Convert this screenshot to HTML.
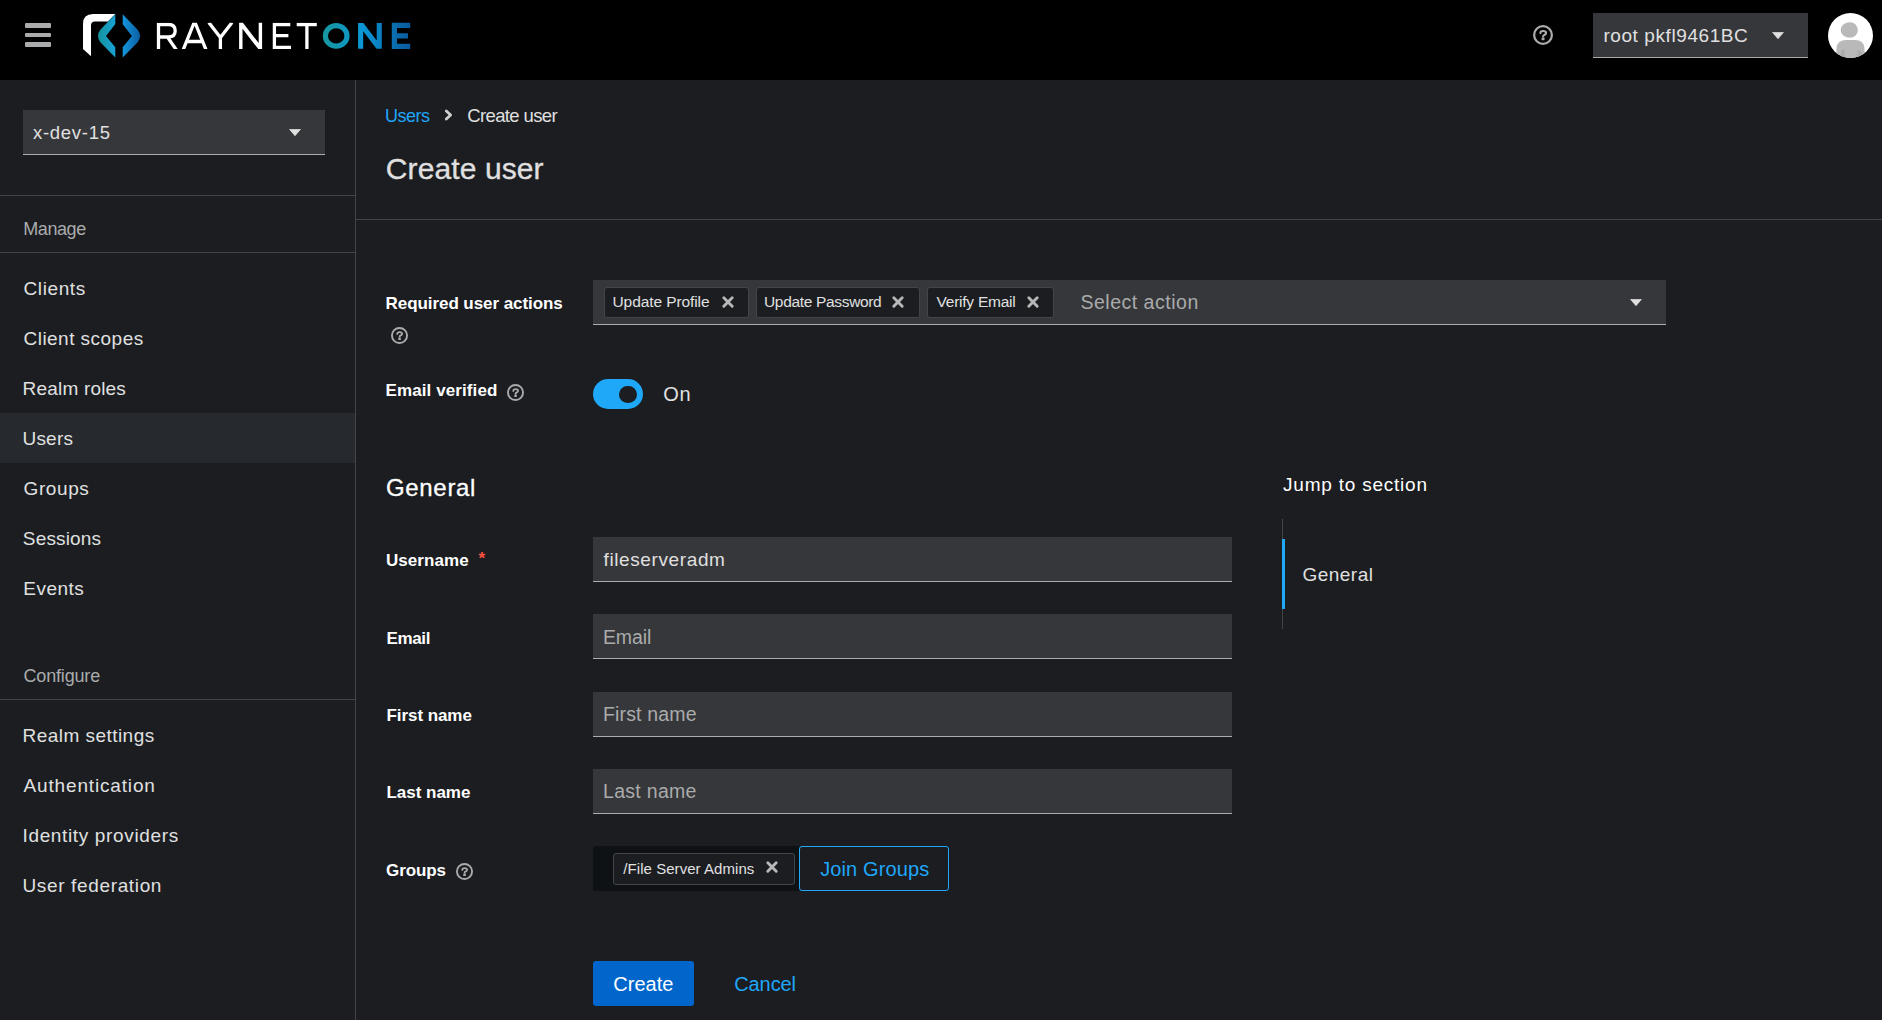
<!DOCTYPE html>
<html><head><meta charset="utf-8"><title>Create user</title>
<style>
html,body{margin:0;padding:0;}
body{width:1882px;height:1020px;overflow:hidden;position:relative;background:#1b1d21;font-family:'Liberation Sans',sans-serif;}
.a{position:absolute;display:block;}
.t{position:absolute;white-space:nowrap;line-height:1;font-family:'Liberation Sans',sans-serif;}
.masthead{position:absolute;left:0;top:0;width:1882px;height:80px;background:#000;}
.bar{position:absolute;left:25px;width:26px;height:4.6px;background:#aaabac;border-radius:1px;}
.sidebar{position:absolute;left:0;top:80px;width:355px;height:940px;background:#1b1d21;border-right:1px solid #444548;}
.hr{position:absolute;height:1px;background:#444548;}
.field{position:absolute;background:#36373a;box-sizing:border-box;border-bottom:1px solid #aaabac;}
.chip{position:absolute;box-sizing:border-box;background:#1b1d21;border:1px solid #444548;border-radius:3px;}
</style></head><body>

<div class="masthead" role="banner">
<div class="bar" style="top:23px"></div><div class="bar" style="top:32.6px"></div><div class="bar" style="top:42.2px"></div>
</div>
<svg class="a" style="left:78px;top:8px" width="345" height="56" viewBox="78 8 345 56">
<defs>
<linearGradient id="gl" x1="98" y1="0" x2="115.5" y2="0" gradientUnits="userSpaceOnUse"><stop offset="0" stop-color="#16929b"/><stop offset="1" stop-color="#17a3d6"/></linearGradient>
<linearGradient id="gr" x1="122.7" y1="0" x2="140" y2="0" gradientUnits="userSpaceOnUse"><stop offset="0" stop-color="#1496dc"/><stop offset="1" stop-color="#0c5fa3"/></linearGradient>
<linearGradient id="gone" x1="323" y1="0" x2="410" y2="0" gradientUnits="userSpaceOnUse"><stop offset="0" stop-color="#17979d"/><stop offset="0.45" stop-color="#0b97d6"/><stop offset="1" stop-color="#0a5a9c"/></linearGradient>
<clipPath id="cw"><rect x="150" y="22.8" width="170" height="26.3"/></clipPath>
<clipPath id="co"><rect x="320" y="23" width="95" height="25.8"/></clipPath>
</defs>
<path fill="#ffffff" d="M83 49V24Q83 14 93 14H115.3L107.9 21.5H95Q91 21.5 91 25.5V56.3Z"/>
<path fill="url(#gl)" d="M115.3 14.3V24L106 36L115.3 47.3V57.4L100.3 42.3Q98 39.5 98 36Q98 32.5 100.3 29.7Z"/>
<path fill="url(#gr)" d="M122.7 14.3V24.2L131.9 36L122.7 47.3V57.4L137.7 42.3Q140 39.5 140 36Q140 32.5 137.7 29.7Z"/>
<g fill="none" stroke="#ffffff" stroke-width="3.3" stroke-linejoin="miter" clip-path="url(#cw)">
<path d="M158.5 49.1V24.5H168.5Q175.2 24.5 175.2 30.8Q175.2 37 168.5 37H158.5M167.5 37L176.4 50"/>
<path d="M182.9 50.5L194.6 21.5L206.3 50.5M187.5 41.5H201.7"/>
<path d="M208.8 22.5L220.4 37.5L232 22.5M220.4 37.5V49.1"/>
<path d="M274.4 49.1V24.5H290.3M274.4 35.6H288.4M274.4 47.5H291"/>
<path d="M296.7 24.5H316.8M306.9 24.5V49.1"/>
</g>
<g fill="none" stroke="url(#gone)" stroke-width="5.2">
<ellipse cx="336.2" cy="35.9" rx="10.8" ry="10.3"/>
<path d="M394.4 49V25.4H410.2M394.4 35.8H408M394.4 46.4H410.2"/>
</g>
<path fill="#ffffff" d="M239.1 49.1V22.8H242.9L258.7 43.1V22.8H262.1V49.1H258.3L242.5 28.8V49.1Z"/>
<path fill="url(#gone)" d="M358.1 48.8V23H363.4L376.7 40.6V23H381.8V48.8H376.5L363.2 31.2V48.8Z"/>
</svg>
<svg class="a" style="left:1533.00px;top:25.00px" width="20" height="20" viewBox="0 0 17 17"><circle cx="8.5" cy="8.5" r="7.55" fill="none" stroke="#aaabac" stroke-width="1.9"/><path d="M6.3 6.9C6.3 5.6 7.3 5.1 8.6 5.1C10 5.1 11.1 5.8 11.1 6.8C11.1 7.9 10.2 8.2 9.4 8.6C8.8 8.9 8.6 9.2 8.6 9.7" fill="none" stroke="#aaabac" stroke-width="1.8" stroke-linecap="round"/><rect x="7.3" y="10.6" width="2.5" height="2.4" rx="0.3" fill="#aaabac"/></svg>
<div class="field" style="left:1593px;top:13px;width:215px;height:45px"></div>
<svg class="a" style="left:1772px;top:32px" width="12" height="7" viewBox="0 0 12 7"><path d="M0.6 0.4H11.4L6.0 6.7Z" fill="#e0e0e0" stroke="#e0e0e0" stroke-width="0.8" stroke-linejoin="round"/></svg>
<svg class="a" style="left:1828px;top:13px" width="45" height="45" viewBox="0 0 45 45">
<defs><clipPath id="ac"><circle cx="22.5" cy="22.5" r="22.5"/></clipPath></defs>
<circle cx="22.5" cy="22.5" r="22.5" fill="#ffffff"/>
<g clip-path="url(#ac)">
<circle cx="22" cy="17" r="7.8" fill="#b9b9b9"/>
<path d="M22 9.2a7.8 7.8 0 0 0 0 15.6a7.8 6.6 0 0 1 0-15.6z" fill="#a9a9a9"/>
<path d="M8.2 46L8.5 35Q9.5 27.3 18 27.1H27Q35.5 27.3 36.5 35L36.8 46Z" fill="#b9b9b9"/>
<path d="M13 46V40Q13 37 16.5 36.3V46Z" fill="#acacac"/>
<path d="M29.5 46V37.2Q33.5 37.5 33.8 41V46Z" fill="#acacac"/>
</g>
</svg>
<nav class="sidebar"></nav>
<div class="field" style="left:23px;top:110px;width:302px;height:45px"></div>
<svg class="a" style="left:289px;top:129px" width="12" height="7" viewBox="0 0 12 7"><path d="M0.6 0.4H11.4L6.0 6.7Z" fill="#e0e0e0" stroke="#e0e0e0" stroke-width="0.8" stroke-linejoin="round"/></svg>
<div class="hr" style="left:0;top:195px;width:355px"></div>
<div class="hr" style="left:0;top:252px;width:355px"></div>
<div class="a" style="left:0;top:413px;width:355px;height:50px;background:#26292d"></div>
<div class="hr" style="left:0;top:699px;width:355px"></div>
<div class="hr" style="left:356px;top:219px;width:1526px"></div>
<svg class="a" style="left:444px;top:109px" width="9" height="12" viewBox="0 0 9 12"><path d="M2.3 2L6.6 6L2.3 10" fill="none" stroke="#d0d0d0" stroke-width="2.8" stroke-linejoin="round" stroke-linecap="round"/></svg>
<div class="field" style="left:593px;top:280px;width:1073px;height:45px"></div>
<div class="chip" style="left:604px;top:287px;width:145px;height:31px"></div>
<div class="chip" style="left:756px;top:287px;width:164px;height:31px"></div>
<div class="chip" style="left:927px;top:287px;width:127px;height:31px"></div>
<svg class="a" style="left:719.5px;top:293.7px" width="16" height="16" viewBox="0 0 16 16"><path d="M3.8 3.8L12.2 12.2M12.2 3.8L3.8 12.2" stroke="#b8b8b8" stroke-width="2.9" stroke-linecap="round"/></svg>
<svg class="a" style="left:890.3px;top:293.7px" width="16" height="16" viewBox="0 0 16 16"><path d="M3.8 3.8L12.2 12.2M12.2 3.8L3.8 12.2" stroke="#b8b8b8" stroke-width="2.9" stroke-linecap="round"/></svg>
<svg class="a" style="left:1024.5px;top:293.7px" width="16" height="16" viewBox="0 0 16 16"><path d="M3.8 3.8L12.2 12.2M12.2 3.8L3.8 12.2" stroke="#b8b8b8" stroke-width="2.9" stroke-linecap="round"/></svg>
<svg class="a" style="left:1630px;top:299px" width="12" height="7" viewBox="0 0 12 7"><path d="M0.6 0.4H11.4L6.0 6.7Z" fill="#e0e0e0" stroke="#e0e0e0" stroke-width="0.8" stroke-linejoin="round"/></svg>
<svg class="a" style="left:391.20px;top:326.70px" width="17" height="17" viewBox="0 0 17 17"><circle cx="8.5" cy="8.5" r="7.55" fill="none" stroke="#aaabac" stroke-width="1.9"/><path d="M6.3 6.9C6.3 5.6 7.3 5.1 8.6 5.1C10 5.1 11.1 5.8 11.1 6.8C11.1 7.9 10.2 8.2 9.4 8.6C8.8 8.9 8.6 9.2 8.6 9.7" fill="none" stroke="#aaabac" stroke-width="1.8" stroke-linecap="round"/><rect x="7.3" y="10.6" width="2.5" height="2.4" rx="0.3" fill="#aaabac"/></svg>
<svg class="a" style="left:507.00px;top:383.80px" width="17" height="17" viewBox="0 0 17 17"><circle cx="8.5" cy="8.5" r="7.55" fill="none" stroke="#aaabac" stroke-width="1.9"/><path d="M6.3 6.9C6.3 5.6 7.3 5.1 8.6 5.1C10 5.1 11.1 5.8 11.1 6.8C11.1 7.9 10.2 8.2 9.4 8.6C8.8 8.9 8.6 9.2 8.6 9.7" fill="none" stroke="#aaabac" stroke-width="1.8" stroke-linecap="round"/><rect x="7.3" y="10.6" width="2.5" height="2.4" rx="0.3" fill="#aaabac"/></svg>
<div class="a" style="left:593px;top:379px;width:50px;height:30px;border-radius:15px;background:#1fa7f8"></div>
<div class="a" style="left:619.1px;top:385.7px;width:17.6px;height:17.6px;border-radius:50%;background:#1b1d21"></div>
<div class="field" style="left:593px;top:537px;width:639px;height:45px"></div>
<div class="field" style="left:593px;top:614px;width:639px;height:45px"></div>
<div class="field" style="left:593px;top:692px;width:639px;height:45px"></div>
<div class="field" style="left:593px;top:769px;width:639px;height:45px"></div>
<div class="t" style="left:478.5px;top:550px;font-size:17px;color:#fe5142;font-weight:700">*</div>
<svg class="a" style="left:455.50px;top:862.70px" width="17" height="17" viewBox="0 0 17 17"><circle cx="8.5" cy="8.5" r="7.55" fill="none" stroke="#aaabac" stroke-width="1.9"/><path d="M6.3 6.9C6.3 5.6 7.3 5.1 8.6 5.1C10 5.1 11.1 5.8 11.1 6.8C11.1 7.9 10.2 8.2 9.4 8.6C8.8 8.9 8.6 9.2 8.6 9.7" fill="none" stroke="#aaabac" stroke-width="1.8" stroke-linecap="round"/><rect x="7.3" y="10.6" width="2.5" height="2.4" rx="0.3" fill="#aaabac"/></svg>
<div class="a" style="left:593px;top:846px;width:206px;height:45px;background:#0f1214;border-radius:3px 0 0 3px"></div>
<div class="chip" style="left:613px;top:853px;width:182px;height:32px"></div>
<svg class="a" style="left:764.3px;top:859.4px" width="16" height="16" viewBox="0 0 16 16"><path d="M3.8 3.8L12.2 12.2M12.2 3.8L3.8 12.2" stroke="#b8b8b8" stroke-width="2.9" stroke-linecap="round"/></svg>
<div class="a" style="left:799px;top:846px;width:150px;height:45px;box-sizing:border-box;border:1px solid #1fa7f8;border-radius:3px"></div>
<div class="a" style="left:593px;top:961px;width:101px;height:45px;background:#0066cc;border-radius:3px"></div>
<div class="a" style="left:1282px;top:519px;width:1px;height:110px;background:#444548"></div>
<div class="a" style="left:1282px;top:539px;width:3px;height:70px;background:#1fa7f8"></div>
<div id="hdr_user" class="t" style="left:1603.40px;top:26.40px;font-size:19px;font-weight:400;color:#e0e0e0;letter-spacing:0.586px;">root pkfl9461BC</div>
<div id="realm" class="t" style="left:33.00px;top:123.70px;font-size:18.5px;font-weight:400;color:#e0e0e0;letter-spacing:0.714px;">x-dev-15</div>
<div id="manage" class="t" style="left:23.20px;top:220.00px;font-size:18px;font-weight:400;color:#aaabac;letter-spacing:-0.400px;">Manage</div>
<div id="n_clients" class="t" style="left:23.50px;top:279.00px;font-size:19px;font-weight:400;color:#e0e0e0;letter-spacing:0.600px;">Clients</div>
<div id="n_scopes" class="t" style="left:23.50px;top:329.00px;font-size:19px;font-weight:400;color:#e0e0e0;letter-spacing:0.467px;">Client scopes</div>
<div id="n_roles" class="t" style="left:22.50px;top:379.00px;font-size:19px;font-weight:400;color:#e0e0e0;letter-spacing:0.200px;">Realm roles</div>
<div id="n_users" class="t" style="left:22.50px;top:428.80px;font-size:19px;font-weight:400;color:#e0e0e0;letter-spacing:0.200px;">Users</div>
<div id="n_groups" class="t" style="left:23.50px;top:479.00px;font-size:19px;font-weight:400;color:#e0e0e0;letter-spacing:0.600px;">Groups</div>
<div id="n_sessions" class="t" style="left:22.80px;top:529.00px;font-size:19px;font-weight:400;color:#e0e0e0;letter-spacing:0.171px;">Sessions</div>
<div id="n_events" class="t" style="left:23.30px;top:579.00px;font-size:19px;font-weight:400;color:#e0e0e0;letter-spacing:0.480px;">Events</div>
<div id="configure" class="t" style="left:23.50px;top:667.40px;font-size:18px;font-weight:400;color:#aaabac;letter-spacing:-0.175px;">Configure</div>
<div id="n_realmset" class="t" style="left:22.50px;top:725.80px;font-size:19px;font-weight:400;color:#e0e0e0;letter-spacing:0.462px;">Realm settings</div>
<div id="n_auth" class="t" style="left:23.50px;top:776.00px;font-size:19px;font-weight:400;color:#e0e0e0;letter-spacing:0.846px;">Authentication</div>
<div id="n_idp" class="t" style="left:22.50px;top:825.70px;font-size:19px;font-weight:400;color:#e0e0e0;letter-spacing:0.647px;">Identity providers</div>
<div id="n_fed" class="t" style="left:22.50px;top:875.70px;font-size:19px;font-weight:400;color:#e0e0e0;letter-spacing:0.643px;">User federation</div>
<div id="bc_users" class="t" style="left:385.10px;top:107.00px;font-size:18px;font-weight:400;color:#1fa7f8;letter-spacing:-0.550px;">Users</div>
<div id="bc_create" class="t" style="left:467.20px;top:107.00px;font-size:18.5px;font-weight:400;color:#e0e0e0;letter-spacing:-0.620px;">Create user</div>
<div id="title" class="t" style="left:385.80px;top:153.90px;font-size:30px;font-weight:400;color:#e0e0e0;letter-spacing:0.100px;-webkit-text-stroke:0.3px #e0e0e0">Create user</div>
<div id="l_rua" class="t" style="left:385.60px;top:295.20px;font-size:17px;font-weight:700;color:#ffffff;letter-spacing:-0.070px;">Required user actions</div>
<div id="chip1" class="t" style="left:612.50px;top:293.90px;font-size:15.5px;font-weight:400;color:#e0e0e0;letter-spacing:-0.092px;">Update Profile</div>
<div id="chip2" class="t" style="left:764.00px;top:293.90px;font-size:15.5px;font-weight:400;color:#e0e0e0;letter-spacing:-0.329px;">Update Password</div>
<div id="chip3" class="t" style="left:936.50px;top:293.90px;font-size:15.5px;font-weight:400;color:#e0e0e0;letter-spacing:-0.236px;">Verify Email</div>
<div id="sel_ph" class="t" style="left:1080.40px;top:292.90px;font-size:19.5px;font-weight:400;color:#aaabac;letter-spacing:0.517px;">Select action</div>
<div id="l_ev" class="t" style="left:385.60px;top:381.90px;font-size:17px;font-weight:700;color:#ffffff;letter-spacing:0.092px;">Email verified</div>
<div id="on" class="t" style="left:663.20px;top:383.90px;font-size:20px;font-weight:400;color:#e0e0e0;letter-spacing:0.800px;">On</div>
<div id="h_general" class="t" style="left:386.00px;top:475.90px;font-size:24px;font-weight:400;color:#ffffff;letter-spacing:0.667px;-webkit-text-stroke:0.3px #ffffff">General</div>
<div id="l_user" class="t" style="left:386.00px;top:552.30px;font-size:17px;font-weight:700;color:#ffffff;letter-spacing:0.057px;">Username</div>
<div id="v_user" class="t" style="left:603.50px;top:550.00px;font-size:19px;font-weight:400;color:#e0e0e0;letter-spacing:0.617px;">fileserveradm</div>
<div id="l_email" class="t" style="left:386.50px;top:630.00px;font-size:17px;font-weight:700;color:#ffffff;letter-spacing:-0.350px;">Email</div>
<div id="p_email" class="t" style="left:602.90px;top:628.00px;font-size:19.5px;font-weight:400;color:#aaabac;letter-spacing:-0.050px;">Email</div>
<div id="l_first" class="t" style="left:386.50px;top:707.40px;font-size:17px;font-weight:700;color:#ffffff;letter-spacing:-0.067px;">First name</div>
<div id="p_first" class="t" style="left:603.00px;top:705.40px;font-size:19.5px;font-weight:400;color:#aaabac;letter-spacing:0.156px;">First name</div>
<div id="l_last" class="t" style="left:386.50px;top:784.30px;font-size:17px;font-weight:700;color:#ffffff;letter-spacing:-0.025px;">Last name</div>
<div id="p_last" class="t" style="left:603.00px;top:782.30px;font-size:19.5px;font-weight:400;color:#aaabac;letter-spacing:0.300px;">Last name</div>
<div id="l_groups" class="t" style="left:386.00px;top:862.00px;font-size:17px;font-weight:700;color:#ffffff;letter-spacing:-0.080px;">Groups</div>
<div id="gchip" class="t" style="left:623.30px;top:861.00px;font-size:15px;font-weight:400;color:#e0e0e0;letter-spacing:0.056px;">/File Server Admins</div>
<div id="join" class="t" style="left:820.20px;top:858.90px;font-size:20px;font-weight:400;color:#1fa7f8;letter-spacing:0.120px;">Join Groups</div>
<div id="create" class="t" style="left:613.30px;top:974.20px;font-size:20px;font-weight:400;color:#ffffff;letter-spacing:-0.000px;">Create</div>
<div id="cancel" class="t" style="left:734.30px;top:974.20px;font-size:20px;font-weight:400;color:#1fa7f8;letter-spacing:-0.120px;">Cancel</div>
<div id="jump" class="t" style="left:1283.10px;top:475.10px;font-size:19px;font-weight:400;color:#ffffff;letter-spacing:0.771px;">Jump to section</div>
<div id="jump_gen" class="t" style="left:1302.40px;top:564.80px;font-size:19px;font-weight:400;color:#e0e0e0;letter-spacing:0.500px;">General</div>
</body></html>
